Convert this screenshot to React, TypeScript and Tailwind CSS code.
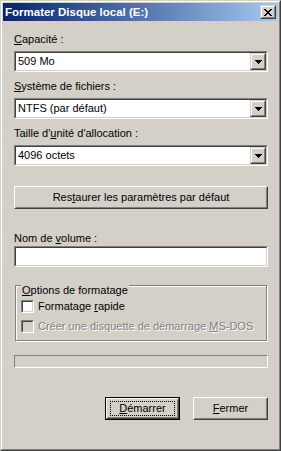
import React from "react";

function Raised({ children, className = "" }: { children?: React.ReactNode; className?: string }) {
  return (
    <div className={"border border-t-white border-l-white border-b-[#404040] border-r-[#404040] " + className}>
      <div className="w-full h-full border border-t-[#d4d0c8] border-l-[#d4d0c8] border-b-[#808080] border-r-[#808080] flex items-center justify-center">
        {children}
      </div>
    </div>
  );
}

function CaptionBtn({ children, className = "" }: { children?: React.ReactNode; className?: string }) {
  return (
    <div className={"border border-t-[#d4d0c8] border-l-[#d4d0c8] border-b-[#404040] border-r-[#404040] bg-[#d4d0c8] " + className}>
      <div className="w-full h-full border border-t-white border-l-white border-b-[#808080] border-r-[#808080] flex items-center justify-center">
        {children}
      </div>
    </div>
  );
}

function Sunken({ children, className = "", inner = "bg-white" }: { children?: React.ReactNode; className?: string; inner?: string }) {
  return (
    <div className={"border border-t-[#808080] border-l-[#808080] border-b-white border-r-white " + className}>
      <div className={"w-full h-full border border-t-[#404040] border-l-[#404040] border-b-[#d4d0c8] border-r-[#d4d0c8] flex items-center " + inner}>
        {children}
      </div>
    </div>
  );
}

function Arrow() {
  return (
    <svg width="7" height="4" viewBox="0 0 7 4" shapeRendering="crispEdges">
      <rect x="0" y="0" width="7" height="1" fill="#000" />
      <rect x="1" y="1" width="5" height="1" fill="#000" />
      <rect x="2" y="2" width="3" height="1" fill="#000" />
      <rect x="3" y="3" width="1" height="1" fill="#000" />
    </svg>
  );
}

function CloseX() {
  const rows = [
    [0, 1, 6, 7],
    [1, 2, 5, 6],
    [2, 3, 4, 5],
    [3, 4],
    [2, 3, 4, 5],
    [1, 2, 5, 6],
    [0, 1, 6, 7],
  ];
  return (
    <svg width="8" height="7" viewBox="0 0 8 7" shapeRendering="crispEdges">
      {rows.map((r, y) => r.map((x) => <rect key={y + "-" + x} x={x} y={y} width="1" height="1" fill="#000" />))}
    </svg>
  );
}

function Combo({ value }: { value: string }) {
  return (
    <Sunken className="h-[21px] w-full">
      <span className="flex-1 pl-[2px] text-black">{value}</span>
      <CaptionBtn className="w-[16px] h-full">
        <Arrow />
      </CaptionBtn>
    </Sunken>
  );
}

function Check({ disabled = false }: { disabled?: boolean }) {
  return <Sunken className="w-[13px] h-[13px] shrink-0" inner={disabled ? "bg-[#d4d0c8]" : "bg-white"} />;
}

export default function App() {
  return (
    <div className="w-[281px] h-[451px] bg-[#d4d0c8] border border-t-[#d4d0c8] border-l-[#d4d0c8] border-b-[#404040] border-r-[#404040] font-['Liberation_Sans',Arial,sans-serif] text-[11px] leading-[13px] text-black select-none">
      <div className="w-full h-full border border-t-white border-l-white border-b-[#808080] border-r-[#808080] p-[1px] flex flex-col">
        {/* title bar */}
        <div className="h-[18px] bg-linear-to-r from-[#0a246a] to-[#a6caf0] flex items-center pl-[2px] pr-[2px]">
          <span className="flex-1 text-white font-bold text-[11.5px] leading-[14px]">Formater Disque local (E:)</span>
          <CaptionBtn className="w-[16px] h-[14px]">
            <CloseX />
          </CaptionBtn>
        </div>

        <div className="flex flex-col pl-[11px] pr-[10px] pt-[12px]">
          <div className="h-[13px]"><u className="underline-offset-1">C</u>apacité :</div>
          <div className="mt-[5px]"><Combo value="509 Mo" /></div>

          <div className="h-[13px] mt-[8px]"><u className="underline-offset-1">S</u>ystème de fichiers :</div>
          <div className="mt-[5px]"><Combo value="NTFS (par défaut)" /></div>

          <div className="h-[13px] mt-[8px]">Taille d'<u className="underline-offset-1">u</u>nité d'allocation :</div>
          <div className="mt-[5px]"><Combo value="4096 octets" /></div>

          <Raised className="h-[23px] w-full mt-[20px]">
            <span>Res<u className="underline-offset-1">t</u>aurer les paramètres par défaut</span>
          </Raised>

          <div className="h-[13px] mt-[23px]">Nom de <u className="underline-offset-1">v</u>olume :</div>
          <Sunken className="h-[21px] w-full mt-[1px]" />

          {/* group box */}
          <div className="relative mt-[18px] mx-[1px] h-[56px] border border-[#808080] shadow-[inset_1px_1px_0_#fff,1px_1px_0_#fff] pt-[14px] pl-[5px] flex flex-col gap-[7px]">
            <span className="absolute left-[5px] top-[-2px] bg-[#d4d0c8] px-[1px]">
              <u className="underline-offset-1">O</u>ptions de formatage
            </span>
            <div className="flex items-center gap-[4px] h-[13px]">
              <Check />
              <span>Formatage <u className="underline-offset-1">r</u>apide</span>
            </div>
            <div className="flex items-center gap-[4px] h-[13px]">
              <Check disabled />
              <span className="text-[#808080] [text-shadow:1px_1px_0_#fff]">Créer une disquette de démarrage <u className="underline-offset-1">M</u>S-DOS</span>
            </div>
          </div>

          {/* progress */}
          <div className="mt-[14px] h-[13px] w-full border border-t-[#808080] border-l-[#808080] border-b-white border-r-white" />

          {/* buttons */}
          <div className="mt-[29px] flex justify-end gap-[13px]">
            <div className="w-[75px] h-[23px] border border-black">
              <Raised className="relative w-full h-full">
                <span className="absolute inset-x-[3px] inset-y-[2px] border border-dotted border-black" />
                <span><u className="underline-offset-1">D</u>émarrer</span>
              </Raised>
            </div>
            <Raised className="w-[75px] h-[23px]">
              <span><u className="underline-offset-1">F</u>ermer</span>
            </Raised>
          </div>
        </div>
      </div>
    </div>
  );
}
